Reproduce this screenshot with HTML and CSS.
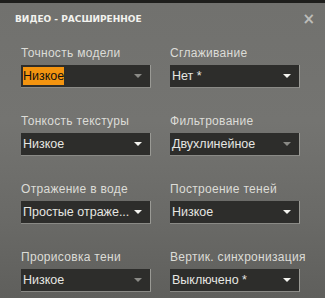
FILE: index.html
```html
<!DOCTYPE html>
<html lang="ru">
<head>
    <meta charset="UTF-8">
    <meta name="viewport" content="width=device-width, initial-scale=1.0">
    <title>Видео - расширенное</title>
    <link rel="stylesheet" href="styles.css">
</head>
<body>
    <div class="topstrip"></div>
    <div class="window">
        <div class="header">
            <span class="title">ВИДЕО - РАСШИРЕННОЕ</span>
            <span class="close">&times;</span>
        </div>
        <div class="options">
            <div class="option">
                <div class="label">Точность модели</div>
                <div class="select disabled"><span class="value picked">Низкое</span><span class="arrow"></span></div>
            </div>
            <div class="option">
                <div class="label">Сглаживание</div>
                <div class="select"><span class="value">Нет *</span><span class="arrow"></span></div>
            </div>
            <div class="option">
                <div class="label">Тонкость текстуры</div>
                <div class="select"><span class="value">Низкое</span><span class="arrow"></span></div>
            </div>
            <div class="option">
                <div class="label">Фильтрование</div>
                <div class="select disabled"><span class="value">Двухлинейное</span><span class="arrow"></span></div>
            </div>
            <div class="option">
                <div class="label">Отражение в воде</div>
                <div class="select"><span class="value">Простые отраже...</span><span class="arrow"></span></div>
            </div>
            <div class="option">
                <div class="label">Построение теней</div>
                <div class="select"><span class="value">Низкое</span><span class="arrow"></span></div>
            </div>
            <div class="option">
                <div class="label">Прорисовка тени</div>
                <div class="select disabled"><span class="value">Низкое</span><span class="arrow"></span></div>
            </div>
            <div class="option">
                <div class="label">Вертик. синхронизация</div>
                <div class="select"><span class="value">Выключено *</span><span class="arrow"></span></div>
            </div>
        </div>
    </div>
</body>
</html>
```

FILE: styles.css
```css
body {
    margin: 0;
    width: 325px;
    height: 298px;
    overflow: hidden;
    font-family: "Liberation Sans", Arial, sans-serif;
    background: #656562;
}
.topstrip {
    height: 3px;
    background: #1e1e1c;
}
.window {
    height: 295px;
    background: linear-gradient(180deg, #71716e 0%, #747471 40%, #696966 75%, #5f5f5c 100%);
}
.header {
    display: flex;
    justify-content: space-between;
    align-items: center;
    padding: 7px 10px 0 15px;
    height: 18px;
}
.title {
    font-family: "DejaVu Sans", sans-serif;
    font-weight: bold;
    font-size: 9px;
    color: #f2f2ee;
}
.close {
    font-family: "DejaVu Sans", sans-serif;
    font-weight: bold;
    font-size: 15px;
    color: #bdbdb9;
    line-height: 1;
}
.options {
    display: grid;
    grid-template-columns: 130px 130px;
    column-gap: 19px;
    row-gap: 26px;
    padding: 18px 0 0 21px;
}
.label {
    font-size: 12px;
    color: #dcdcd7;
    letter-spacing: 0.3px;
    height: 15px;
    margin-bottom: 4px;
    white-space: nowrap;
}
.select {
    display: flex;
    align-items: center;
    justify-content: space-between;
    height: 22px;
    background: #2d2d2b;
    border-right: 1px solid #9a9a95;
    border-bottom: 1px solid #8a8a86;
    padding: 0 8px 0 2px;
}
.value {
    font-size: 12.5px;
    color: #e6e6e2;
    padding: 2px 0;
    line-height: 14px;
    white-space: nowrap;
}
.value.picked {
    background: #f39410;
    color: #111;
}
.arrow {
    flex: none;
    width: 0;
    height: 0;
    border-left: 4px solid transparent;
    border-right: 4px solid transparent;
    border-top: 4px solid #f4f4f0;
}
.disabled .arrow {
    border-top-color: #8a8a86;
}
```
